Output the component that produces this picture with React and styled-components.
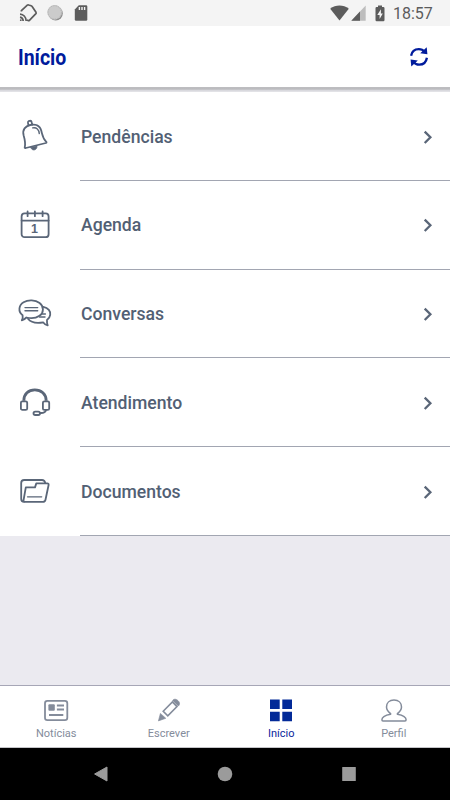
import React from 'react'
import styled, { createGlobalStyle } from 'styled-components'

const GlobalStyle = createGlobalStyle`
  * {
    box-sizing: border-box;
  }

  body {
    margin: 0;
    background: #ebeaf0;
    font-family: Roboto, 'Noto Sans', sans-serif;
  }
`;

const Screen = styled.div`
  display: flex;
  flex-direction: column;
  width: 450px;
  height: 800px;
  background: #ebeaf0;
  overflow: hidden;

  svg {
    display: block;
    flex: none;
  }
`;

const StatusBar = styled.div`
  display: flex;
  justify-content: space-between;
  flex: none;
  height: 26px;
  padding: 0 17px 0 18px;
  background: #f4f4f4;
  color: #5c5c5c;
`;

const StatusGroup = styled.div`
  display: flex;
  align-items: center;
  gap: ${(props) => props.$gap}px;
`;

const Clock = styled.span`
  margin-left: -1px;
  font-size: 16px;
  line-height: 26px;
  padding-top: 2px;
  width: 40px;
  white-space: nowrap;
`;

const Header = styled.header`
  display: flex;
  align-items: center;
  justify-content: space-between;
  flex: none;
  height: 61px;
  padding: 0 21px 0 18px;
  background: #fff;
  color: #001b9c;
`;

const HeaderShadow = styled.div`
  flex: none;
  height: 5px;
  background: linear-gradient(#bdbdc0 20%, #bababd 40%, #d9d9de 70%, #e6e6ea);
`;

const Title = styled.h1`
  margin: 1px 0 0;
  font-size: 22.5px;
  line-height: 28px;
  font-weight: 700;
  transform: scaleX(0.865);
  transform-origin: left center;
`;

const Menu = styled.ul`
  display: grid;
  grid-template-rows: repeat(5, 1fr);
  flex: none;
  height: 444px;
  margin: 0;
  padding: 0;
  list-style: none;
  background: #fff;
`;

const MenuRow = styled.li`
  display: grid;
  grid-template-columns: 80px 1fr;
  color: #5a6678;
`;

const MenuIcon = styled.div`
  display: flex;
  align-items: center;
  padding-left: 17px;
`;

const MenuBody = styled.div`
  display: flex;
  align-items: center;
  justify-content: space-between;
  padding: 1.6px 15px 0 1px;
  border-bottom: 1px solid #a2a6b2;
`;

const MenuLabel = styled.span`
  font-size: 17.6px;
  line-height: 24px;
  font-weight: 500;
  color: #526074;
`;

const Spacer = styled.div`
  flex: 1;
`;

const TabBar = styled.nav`
  display: grid;
  grid-template-columns: repeat(4, 1fr);
  flex: none;
  height: 63px;
  background: #fff;
  border-top: 1px solid #a6a6b6;
  border-bottom: 1px solid #c4c4c8;
`;

const Tab = styled.div`
  display: flex;
  flex-direction: column;
  align-items: center;
  padding-top: 10px;
  color: ${(props) => (props.$active ? '#0a1f9c' : '#848c9b')};
`;

const TabLabel = styled.span`
  margin-top: 3px;
  font-size: 11px;
  line-height: 14px;
`;

const NavBar = styled.div`
  display: grid;
  grid-template-columns: repeat(3, 124px);
  justify-content: center;
  justify-items: center;
  align-items: center;
  flex: none;
  height: 52px;
  background: #000;
  color: #9b9b9b;
`;

const LineIcon = ({ children }) => (
  <svg width="36" height="36" viewBox="0 0 36 36" fill="none" stroke="currentColor" strokeWidth="1.8" strokeLinecap="round" strokeLinejoin="round">
    {children}
  </svg>
)

const BellIcon = () => (
  <LineIcon>
    <path d="M11.4 7.2 11 4.9C10.8 2.5 14.3 2 14.7 4.2L15.2 6.5"/>
    <path d="M7.7 29.5C8.8 25.5 8.1 22.3 6.6 17.2C5.1 11.5 8.5 8.1 13.1 7C18.2 5.7 22.8 7.3 24.3 12.7C25.7 18 25.6 20.4 29.3 23.9C29.7 24.4 29.5 24.8 28.9 25L8.8 30C8 30.1 7.6 30 7.7 29.5Z"/>
    <path d="M15.7 9.9C19.6 9.2 22 11.4 22.3 15.6" strokeWidth="1.4"/>
    <path d="M13.8 29.6 20 28C20.4 32.4 14.8 33.6 13.8 29.6Z" fill="currentColor" strokeWidth="0.7"/>
  </LineIcon>
)

const CalendarIcon = () => (
  <LineIcon>
    <rect x="4.6" y="6.4" width="27" height="23.8" rx="3"/>
    <path d="M4.6 13.6H31.6M10.6 4.5V9.2M17.9 4.5V9.2M25.6 4.5V9.2"/>
    <text x="17.6" y="26.2" textAnchor="middle" fontFamily="Liberation Sans, sans-serif" fontSize="12.5" fontWeight="700" fill="currentColor" stroke="none">1</text>
  </LineIcon>
)

const ChatIcon = () => (
  <LineIcon>
    <path d="M5.6 19.3C.7 15.7 1.8 9 6.6 6.2C11.2 3.5 18.3 3.8 22.6 6.9C27.1 10.2 27 16.6 22.5 19.8C18.7 22.4 13.9 22.7 9.4 21.5C8 22.9 6.7 23.9 4.8 24.3C5.7 22.6 6 21.1 5.6 19.3Z"/>
    <path d="M26.3 10.9C31.3 11.8 33.8 15.4 33.2 18.8C32.9 21 31.6 22.8 30 24C29.8 26 30 27.5 30.7 29.3C28.8 28.9 27.3 27.8 26.3 26.4C20.5 27.4 14 26.7 11 22.8"/>
    <path d="M8 11.6H20.7M8 14.8H20.7M25.2 18H28.4M22.5 21H28" strokeWidth="1.4"/>
  </LineIcon>
)

const HeadsetIcon = () => (
  <LineIcon>
    <path d="M6.8 15.8C6.8 9 11.5 4.9 17.8 4.9S29.2 9 29.2 15.8" strokeWidth="2.8" strokeLinecap="butt"/>
    <rect x="3.9" y="16.3" width="6.3" height="8.6" rx="1.5"/>
    <rect x="25.9" y="16.3" width="6.3" height="8.6" rx="1.5"/>
    <path d="M29 25.3C28.4 27.3 26.5 28.1 23.6 28" strokeWidth="1.8"/>
    <rect x="16.5" y="26.6" width="6.5" height="3.4" rx="1.7"/>
  </LineIcon>
)

const FolderIcon = () => (
  <LineIcon>
    <path d="M7 27.7C5 27.7 4.2 26.5 4.2 24.7V9C4.2 7 5.3 6 7.2 6H25C27 6 27.8 7 28.2 8.9"/>
    <path d="M6.5 26.5 8.8 13.4H18L19.3 9.4H30.3C31.3 9.4 31.8 10 31.6 11L28.5 25.7C28.2 27.1 27.3 27.8 25.9 27.8H7.4C6.7 27.8 6.4 27.3 6.5 26.5Z"/>
    <path d="M10.5 22.8H24.7" strokeWidth="1.3"/>
  </LineIcon>
)

const ChevronIcon = () => (
  <svg width="14" height="16" viewBox="0 0 14 16" fill="none" stroke="currentColor" strokeWidth="2.3">
    <path d="M3.7 2.6 9.4 8.3 3.7 14"/>
  </svg>
)

const CastIcon = () => (
  <svg width="20" height="20" viewBox="0 0 20 20" fill="none" stroke="currentColor" strokeWidth="1.7">
    <path d="M3.4 8.6V7.6L9.3 2.2Q9.9 1.7 10.7 2L13.1 2.8Q13.9 3.1 14.3 3.7L18 9.3Q18.4 10 17.9 10.6L11.4 17.4Q10.9 17.9 10.2 17.6L9 17" strokeLinejoin="round"/>
    <path d="M2 11.1C5.3 11.3 8 14 8.2 18M2 14.1C3.8 14.4 5.1 15.7 5.2 18"/>
    <circle cx="2.8" cy="17.2" r="0.9" fill="currentColor" stroke="none"/>
  </svg>
)

const DiscIcon = () => (
  <svg width="17" height="18" viewBox="0 0 17 18">
    <circle cx="8.7" cy="9.4" r="7.1" fill="#8b8b8b"/>
    <circle cx="7.7" cy="8.4" r="7.3" fill="#cbcbcb"/>
    <circle cx="7.7" cy="8.4" r="6.7" fill="none" stroke="#b1b1b1" strokeDasharray="1.3 1"/>
  </svg>
)

const SdCardIcon = () => (
  <svg width="15" height="18" viewBox="0 0 15 18">
    <path d="M5.8 1.2H13Q14.3 1.2 14.3 2.5V15.5Q14.3 16.8 13 16.8H3.1Q1.8 16.8 1.8 15.5V5.6Z" fill="currentColor"/>
    <path d="M6.4 3V6.1M9 3V6.1M11.6 3V6.1" stroke="#f4f4f4" strokeWidth="1.4"/>
  </svg>
)

const WifiIcon = () => (
  <svg width="19" height="16" viewBox="0 0 19 16">
    <path d="M.2 3.7C5.6-.6 13.4-.6 18.8 3.7L9.5 15.4Z" fill="currentColor"/>
  </svg>
)

const SignalIcon = () => (
  <svg width="15" height="16" viewBox="0 0 15 16">
    <path d="M.3 15.7 14.7.6V15.7Z" fill="#bdbdbd"/>
    <path d="M.3 15.7 9 6.6V15.7Z" fill="currentColor"/>
  </svg>
)

const BatteryIcon = () => (
  <svg width="24" height="17" viewBox="-7 0 24 17">
    <path d="M3 .4H7V2H8.3Q9.5 2 9.5 3.2V15Q9.5 16.2 8.3 16.2H1.7Q.5 16.2 .5 15V3.2Q.5 2 1.7 2H3Z" fill="currentColor"/>
    <path d="M5.9 4.3 2.3 9.9H4.6V14L7.8 8.4H5.9Z" fill="#f4f4f4"/>
  </svg>
)

const RefreshIcon = () => (
  <svg width="20" height="20" viewBox="0 0 20 20" fill="none" stroke="currentColor" strokeWidth="2.3">
    <path d="M2.1 8.8C2.8 4.4 6 2.1 9.8 2.1C12.2 2.1 14.2 3 15.6 4.8"/>
    <path d="M17.9 10.8C17.2 15.3 14 17.7 10.2 17.7C7.8 17.7 5.9 16.8 4.4 15"/>
    <path d="M17.7.2 18.4 7.2 11.2 6.3Z" fill="currentColor" stroke="none"/>
    <path d="M2.3 19.6 1.6 12.6 8.8 13.5Z" fill="currentColor" stroke="none"/>
  </svg>
)

const NewsIcon = () => (
  <svg width="28" height="28" viewBox="0 0 28 28" fill="none" stroke="currentColor" strokeWidth="1.8">
    <rect x="3" y="4.8" width="22.3" height="19.4" rx="2.4"/>
    <rect x="6.4" y="8.3" width="6.4" height="6.4" rx="1" fill="currentColor" stroke="none"/>
    <path d="M14.9 9.5H22M14.9 13.6H22M7 19H21.3" strokeWidth="2"/>
  </svg>
)

const PencilIcon = () => (
  <svg width="28" height="28" viewBox="0 0 28 28">
    <path d="M8.2 15.2 17.4 6 22 10.6 12.8 19.8Z" fill="none" stroke="currentColor" strokeWidth="1.6"/>
    <path d="M5.4 17.4 10.8 22.3 3.4 24.9Z" fill="currentColor" stroke="currentColor" strokeWidth="0.6" strokeLinejoin="round"/>
    <path d="M17.6 4.4 18.5 3.6C20 2.8 21.7 3.2 23.1 4.7C24.6 6.1 25 7.7 24.1 9.2L23.3 10.1Z" fill="currentColor" stroke="currentColor" strokeWidth="0.6"/>
  </svg>
)

const GridIcon = () => (
  <svg width="28" height="28" viewBox="0 0 28 28">
    <path d="M3 3.5H12.7V13H3ZM15.3 3.5H25V13H15.3ZM3 15.7H12.7V25.3H3ZM15.3 15.7H25V25.3H15.3Z" fill="#032a98"/>
  </svg>
)

const ProfileIcon = () => (
  <svg width="28" height="28" viewBox="0 0 28 28" fill="none" stroke="currentColor" strokeWidth="1.5" strokeLinejoin="round">
    <path d="M10.6 17.6V18.2C4.8 19.2 1.9 20.8 1.9 23.8Q1.9 24.9 3 24.9H25Q26.1 24.9 26.1 23.8C26.1 20.8 23.2 19.2 17.4 18.2V17.6C20.2 15.5 21.5 13.4 21.5 11C21.5 6.9 18.6 4 14 4S6.5 6.9 6.5 11C6.5 13.4 7.8 15.5 10.6 17.6Z"/>
  </svg>
)

const menuItems = [
  { label: 'Pendências', icon: BellIcon },
  { label: 'Agenda', icon: CalendarIcon },
  { label: 'Conversas', icon: ChatIcon },
  { label: 'Atendimento', icon: HeadsetIcon },
  { label: 'Documentos', icon: FolderIcon },
]

const tabs = [
  { label: 'Notícias', icon: NewsIcon },
  { label: 'Escrever', icon: PencilIcon },
  { label: 'Início', icon: GridIcon, active: true },
  { label: 'Perfil', icon: ProfileIcon },
]

export default function App() {
  return (
    <Screen>
      <GlobalStyle/>
      <StatusBar>
        <StatusGroup $gap={9}>
          <CastIcon/>
          <DiscIcon/>
          <SdCardIcon/>
        </StatusGroup>
        <StatusGroup $gap={2}>
          <WifiIcon/>
          <SignalIcon/>
          <BatteryIcon/>
          <Clock>18:57</Clock>
        </StatusGroup>
      </StatusBar>
      <Header>
        <Title>Início</Title>
        <RefreshIcon/>
      </Header>
      <HeaderShadow/>
      <Menu>
        {menuItems.map(({ label, icon: Icon }) => (
          <MenuRow key={label}>
            <MenuIcon><Icon/></MenuIcon>
            <MenuBody>
              <MenuLabel>{label}</MenuLabel>
              <ChevronIcon/>
            </MenuBody>
          </MenuRow>
        ))}
      </Menu>
      <Spacer/>
      <TabBar>
        {tabs.map(({ label, icon: Icon, active }) => (
          <Tab key={label} $active={active}>
            <Icon/>
            <TabLabel>{label}</TabLabel>
          </Tab>
        ))}
      </TabBar>
      <NavBar>
        <svg width="16" height="16" viewBox="0 0 16 16">
          <path d="M1.6 8 14 1V15Z" fill="currentColor" stroke="currentColor" strokeLinejoin="round"/>
        </svg>
        <svg width="16" height="16" viewBox="0 0 16 16">
          <circle cx="8" cy="8" r="7.3" fill="currentColor"/>
        </svg>
        <svg width="16" height="16" viewBox="0 0 16 16">
          <rect x="1.2" y="1" width="13.6" height="14" rx="0.5" fill="currentColor"/>
        </svg>
      </NavBar>
    </Screen>
  )
}
